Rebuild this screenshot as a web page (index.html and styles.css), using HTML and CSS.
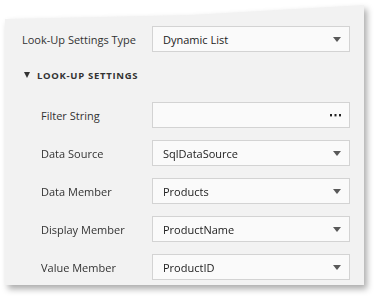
FILE: index.html
```html
<!DOCTYPE html>
<html>
<head>
<meta charset="utf-8">
<link rel="stylesheet" href="styles.css">
</head>
<body>
<div class="frame">
  <div class="panel">
    <div class="row">
      <span class="label">Look-Up Settings Type</span>
      <div class="field"><span class="value">Dynamic List</span><span class="arrow"></span></div>
    </div>
    <div class="section"><span class="tri"></span><span class="section-title">LOOK-UP SETTINGS</span></div>
    <div class="group">
      <div class="row sub">
        <span class="label">Filter String</span>
        <div class="field"><span class="value"></span>
          <svg class="dots" width="11" height="3" viewBox="0 0 11 3"><rect x="0" y="0" width="2" height="2.4" fill="#222"/><rect x="4.5" y="0" width="2" height="2.4" fill="#222"/><rect x="9" y="0" width="2" height="2.4" fill="#222"/></svg>
        </div>
      </div>
      <div class="row sub">
        <span class="label">Data Source</span>
        <div class="field"><span class="value">SqlDataSource</span><span class="arrow"></span></div>
      </div>
      <div class="row sub">
        <span class="label">Data Member</span>
        <div class="field"><span class="value">Products</span><span class="arrow"></span></div>
      </div>
      <div class="row sub">
        <span class="label">Display Member</span>
        <div class="field"><span class="value">ProductName</span><span class="arrow"></span></div>
      </div>
      <div class="row sub">
        <span class="label">Value Member</span>
        <div class="field"><span class="value">ProductID</span><span class="arrow"></span></div>
      </div>
    </div>
  </div>
</div>
</body>
</html>
```

FILE: styles.css
```css
html, body {
  margin: 0;
  padding: 0;
  background: #ffffff;
  height: 299px;
  overflow: hidden;
}
body {
  font-family: "Open Sans", "Noto Sans", sans-serif;
  font-size: 11px;
  color: #333333;
}
.frame {
  padding: 5px 0 0 5px;
  width: 359px;
  filter: drop-shadow(3px 4px 3px rgba(0, 0, 0, 0.33));
}
.panel {
  width: 359px;
  height: 280px;
  box-sizing: border-box;
  background: #f2f2f2;
  padding: 21px 14px 0 17px;
  clip-path: polygon(0 14px, 185px 10px, 100% 0, 100% 100%, 0 100%);
}
.row {
  display: grid;
  grid-template-columns: 130px 198px;
  align-items: center;
  height: 26px;
}
.row.sub .label {
  padding-left: 19px;
}
.label {
  white-space: nowrap;
  color: #333;
}
.field {
  height: 26px;
  box-sizing: border-box;
  border: 1px solid #d3d3d3;
  background: #fafafa;
  display: flex;
  align-items: center;
  padding: 0 8px 0 10px;
  color: #222;
}
.value {
  flex: 1;
}
.arrow {
  width: 0;
  height: 0;
  border-left: 4px solid transparent;
  border-right: 4px solid transparent;
  border-top: 5px solid #595959;
}
.dots {
  display: block;
  margin-top: 1px;
}
.section {
  display: flex;
  align-items: center;
  height: 18px;
  margin: 14px 0 0 2px;
}
.tri {
  width: 0;
  height: 0;
  border-left: 3.5px solid transparent;
  border-right: 3.5px solid transparent;
  border-top: 6px solid #333;
  margin-right: 7px;
}
.section-title {
  font-weight: 700;
  font-size: 9.5px;
  letter-spacing: 0.7px;
  color: #333;
}
.group {
  display: flex;
  flex-direction: column;
  gap: 12px;
  margin-top: 18px;
}
```
